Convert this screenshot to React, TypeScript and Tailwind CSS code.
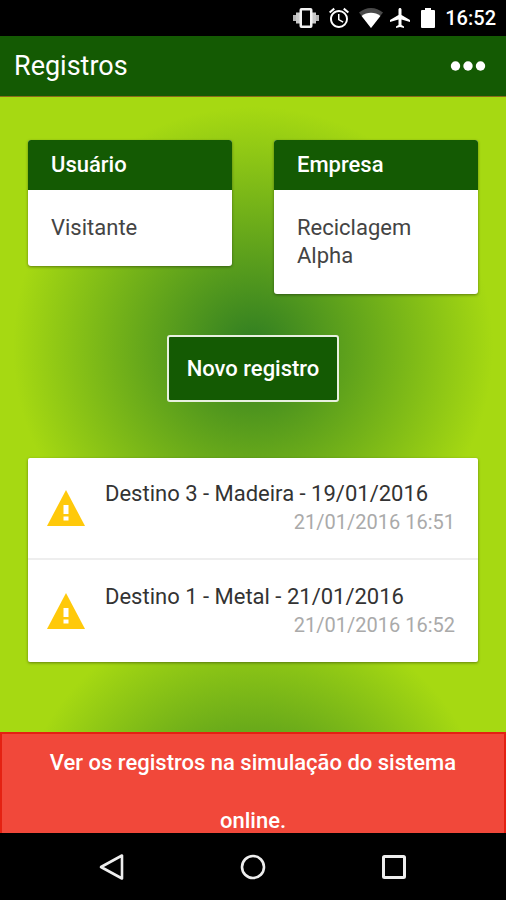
import { MdAirplanemodeActive, MdAlarm } from "react-icons/md";

const cards = [
  { title: "Usuário", value: "Visitante" },
  { title: "Empresa", value: "Reciclagem Alpha" },
];

const records = [
  { id: 2, title: "Destino 3 - Madeira - 19/01/2016", date: "21/01/2016 16:51" },
  { id: 1, title: "Destino 1 - Metal - 21/01/2016", date: "21/01/2016 16:52" },
];

const VibrateIcon = () => (
  <svg width="28" height="20" viewBox="0 0 28 20" aria-hidden="true">
    <rect x="1" y="7" width="3" height="6" fill="#b5b5b5" />
    <rect x="4" y="4.500" width="4" height="11" fill="#c9c9c9" />
    <rect x="20" y="4.500" width="4" height="11" fill="#c9c9c9" />
    <rect x="24" y="7" width="3" height="6" fill="#b5b5b5" />
    <rect x="7.500" y="0" width="13" height="20" rx="2" fill="#f2f2f2" />
    <rect x="10" y="2.500" width="8" height="15" fill="#000" />
  </svg>
);

const WifiIcon = () => (
  <svg width="24" height="20" viewBox="0 0 24 20" aria-hidden="true">
    <path d="M12 20 0 4.600C3.400 1.700 7.600 0 12 0s8.600 1.700 12 4.600z" fill="#4a4a4a" />
    <path d="M12 20 2.600 8C5.300 5.800 8.500 4.700 12 4.700s6.700 1.100 9.400 3.300z" fill="#fff" />
  </svg>
);

const BatteryIcon = () => (
  <svg width="14" height="20" viewBox="0 0 14 20" fill="#fff" aria-hidden="true">
    <path d="M4 0h6v2h3a1 1 0 0 1 1 1v16a1 1 0 0 1-1 1H1a1 1 0 0 1-1-1V3a1 1 0 0 1 1-1h3z" />
  </svg>
);

const WarningIcon = () => (
  <svg width="38" height="36" viewBox="0 0 38 36" className="shrink-0" aria-hidden="true">
    <path d="M19 0 38 36H0z" fill="#ffc90a" />
    <path d="M16.500 15h5v9h-5zM16.500 26.500h5v4h-5z" fill="#fff" />
  </svg>
);

const StatusBar = () => (
  <div className="flex h-9 shrink-0 items-center justify-end bg-black pr-[10px] text-white">
    <VibrateIcon />
    <MdAlarm className="ml-[7px] size-6" />
    <span className="ml-2">
      <WifiIcon />
    </span>
    <MdAirplanemodeActive className="ml-[5px] size-6" />
    <span className="ml-[9px]">
      <BatteryIcon />
    </span>
    <span className="ml-[10px] text-[20px] leading-6 font-medium">16:52</span>
  </div>
);

const Header = () => (
  <header className="flex h-[61px] shrink-0 items-center justify-between border-b border-[#8a6a1c] bg-[#145a03] pr-5 pl-[14px] text-white">
    <h1 className="text-[27px] leading-8">Registros</h1>
    <button type="button" aria-label="Menu">
      <svg width="36" height="12" viewBox="0 0 36 12" fill="#fff">
        <circle cx="5.500" cy="6" r="4.700" />
        <circle cx="18" cy="6" r="4.700" />
        <circle cx="30.500" cy="6" r="4.700" />
      </svg>
    </button>
  </header>
);

const NavBar = () => (
  <nav className="flex h-[67px] shrink-0 items-center justify-center gap-[113px] bg-black">
    <button type="button" aria-label="Voltar">
      <svg width="28" height="28" viewBox="0 0 28 28" fill="none" stroke="#eee" strokeWidth="2.600">
        <path d="M24 2.500v23L3 14z" strokeLinejoin="round" />
      </svg>
    </button>
    <button type="button" aria-label="Início">
      <svg width="28" height="28" viewBox="0 0 28 28" fill="none" stroke="#eee" strokeWidth="2.600">
        <circle cx="14" cy="14" r="11" />
      </svg>
    </button>
    <button type="button" aria-label="Recentes">
      <svg width="28" height="28" viewBox="0 0 28 28" fill="none" stroke="#eee" strokeWidth="3">
        <rect x="3.500" y="3.500" width="21" height="21" rx="1" />
      </svg>
    </button>
  </nav>
);

export default function App() {
  return (
    <div className="flex h-screen flex-col overflow-hidden bg-black font-[Roboto,sans-serif]">
      <StatusBar />
      <Header />

      <main className="min-h-0 flex-1 overflow-hidden bg-[radial-gradient(circle_240px_at_50%_50%,#2f7d22,#a6d912)] bg-[length:100%_500px]">
        {/* Usuário e empresa */}
        <section className="flex items-start gap-[42px] px-7 pt-[43px]">
          {cards.map((card) => (
            <div key={card.title} className="flex-1 overflow-hidden rounded-[3px] bg-white shadow-[0_1px_3px_rgba(0,0,0,0.4)]">
              <h2 className="bg-[#145a03] px-[23px] py-[11px] text-[22px] leading-7 font-medium text-white">
                {card.title}
              </h2>
              <p className="px-[23px] py-6 text-[22px] leading-7 text-[#444]">{card.value}</p>
            </div>
          ))}
        </section>

        <div className="mt-[41px] flex justify-center">
          <button
            type="button"
            className="h-[67px] rounded-[3px] border-2 border-[#e8f0e0] bg-[#145a03] px-[18px] text-[22px] font-medium text-white"
          >
            Novo registro
          </button>
        </div>

        {/* Lista de registros */}
        <ul className="mx-7 mt-14 divide-y-2 divide-[#eee] rounded-[2px] bg-white shadow-[0_1px_3px_rgba(0,0,0,0.4)]">
          {records.map((record) => (
            <li key={record.id} className="flex h-[102px] items-center pr-[23px] pl-[19px]">
              <WarningIcon />
              <div className="ml-5 flex-1">
                <p className="text-[22px] leading-7 text-[#333]">{record.title}</p>
                <p className="text-right text-[20px] leading-7 text-[#aaa]">{record.date}</p>
              </div>
            </li>
          ))}
        </ul>

        <a
          href="#online"
          className="mt-[70px] block border-2 border-[#e42112] bg-[#f1483a] px-8 text-center text-[22px] leading-[58px] font-medium text-white"
        >
          Ver os registros na simulação do sistema online.
        </a>
      </main>

      <NavBar />
    </div>
  );
}
